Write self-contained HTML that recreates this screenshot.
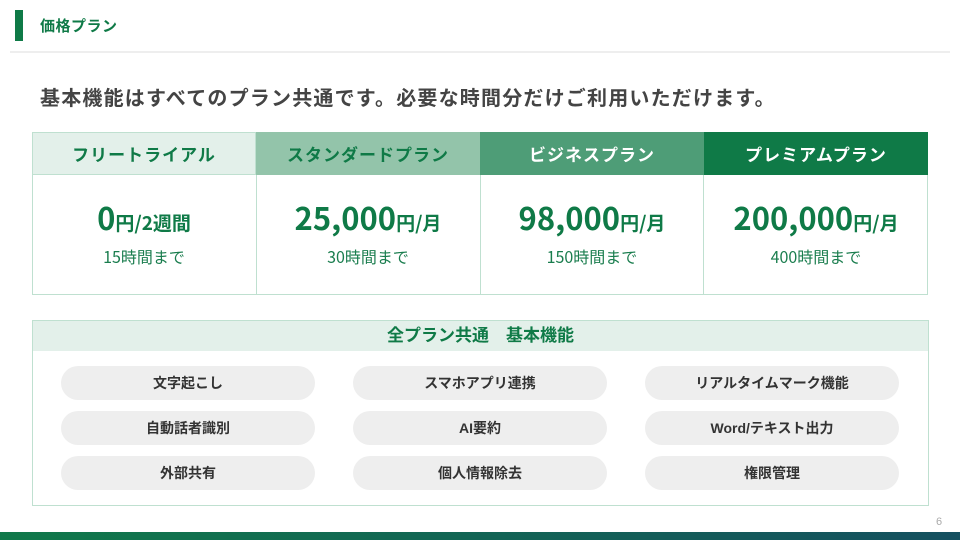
<!DOCTYPE html>
<html><head><meta charset="utf-8"><style>
*{margin:0;padding:0;box-sizing:border-box}
body{width:960px;height:540px;position:relative;background:#fff;font-family:"Liberation Sans","Noto Sans CJK JP",sans-serif;overflow:hidden}
.abs{position:absolute}
.g{color:#0f7a47}
.hd{position:absolute;top:132px;height:43px;width:224px;display:flex;align-items:center;justify-content:center;font-weight:bold;font-size:17px;letter-spacing:1px}
.cell{position:absolute;top:175px;height:120px;width:224px;text-align:center;color:#0f7a47;font-family:"Noto Sans CJK JP",sans-serif}
.price{margin-top:20px;font-size:31px;font-weight:bold;line-height:44px}
.price span{font-size:19px}
.hrs{font-size:16px;margin-top:-2px;color:#1a7d4e;line-height:26px}
.pill{position:absolute;width:254px;height:34px;border-radius:17px;background:#eeeeee;display:flex;align-items:center;justify-content:center;font-size:14px;font-weight:bold;color:#333}
</style></head><body>
<div class="abs" style="left:15px;top:10px;width:8px;height:31px;background:#0f7a47"></div>
<div class="abs g" style="left:40px;top:16px;font-size:15px;font-weight:bold;line-height:22px;letter-spacing:0.5px">価格プラン</div>
<div class="abs" style="left:10px;top:51px;width:940px;height:2px;background:#eeeeee"></div>
<div class="abs" style="left:40px;top:86px;font-size:20px;font-weight:bold;color:#444;line-height:26px;letter-spacing:1.2px">基本機能はすべてのプラン共通です。必要な時間分だけご利用いただけます。</div>

<div class="abs" style="left:32px;top:132px;width:896px;height:163px;border:1px solid #bfe0d0"></div>
<div class="hd g" style="left:32px;background:#e3f0ea;border:1px solid #bfe0d0">フリートライアル</div>
<div class="hd g" style="left:256px;background:#93c4aa">スタンダードプラン</div>
<div class="hd" style="left:480px;background:#4e9d77;color:#fff">ビジネスプラン</div>
<div class="hd" style="left:704px;background:#0f7a47;color:#fff">プレミアムプラン</div>
<div class="abs" style="left:256px;top:175px;width:1px;height:120px;background:#bfe0d0"></div>
<div class="abs" style="left:480px;top:175px;width:1px;height:120px;background:#bfe0d0"></div>
<div class="abs" style="left:703px;top:175px;width:1px;height:120px;background:#bfe0d0"></div>
<div class="cell" style="left:32px"><div class="price">0<span>円/2週間</span></div><div class="hrs">15時間まで</div></div>
<div class="cell" style="left:256px"><div class="price">25,000<span>円/月</span></div><div class="hrs">30時間まで</div></div>
<div class="cell" style="left:480px"><div class="price">98,000<span>円/月</span></div><div class="hrs">150時間まで</div></div>
<div class="cell" style="left:704px"><div class="price">200,000<span>円/月</span></div><div class="hrs">400時間まで</div></div>

<div class="abs" style="left:32px;top:320px;width:897px;height:186px;border:1px solid #bfe0d0"></div>
<div class="abs g" style="left:33px;top:321px;width:895px;height:30px;background:#e3f0ea;text-align:center;font-size:17px;font-weight:bold;line-height:30px">全プラン共通　基本機能</div>
<div class="pill" style="left:61px;top:366px">文字起こし</div>
<div class="pill" style="left:353px;top:366px">スマホアプリ連携</div>
<div class="pill" style="left:645px;top:366px">リアルタイムマーク機能</div>
<div class="pill" style="left:61px;top:411px">自動話者識別</div>
<div class="pill" style="left:353px;top:411px">AI要約</div>
<div class="pill" style="left:645px;top:411px">Word/テキスト出力</div>
<div class="pill" style="left:61px;top:456px">外部共有</div>
<div class="pill" style="left:353px;top:456px">個人情報除去</div>
<div class="pill" style="left:645px;top:456px">権限管理</div>

<div class="abs" style="left:936px;top:516px;font-size:11px;color:#aaa">6</div>
<div class="abs" style="left:0;top:532px;width:960px;height:8px;background:linear-gradient(90deg,#10794a,#155060)"></div>
</body></html>
